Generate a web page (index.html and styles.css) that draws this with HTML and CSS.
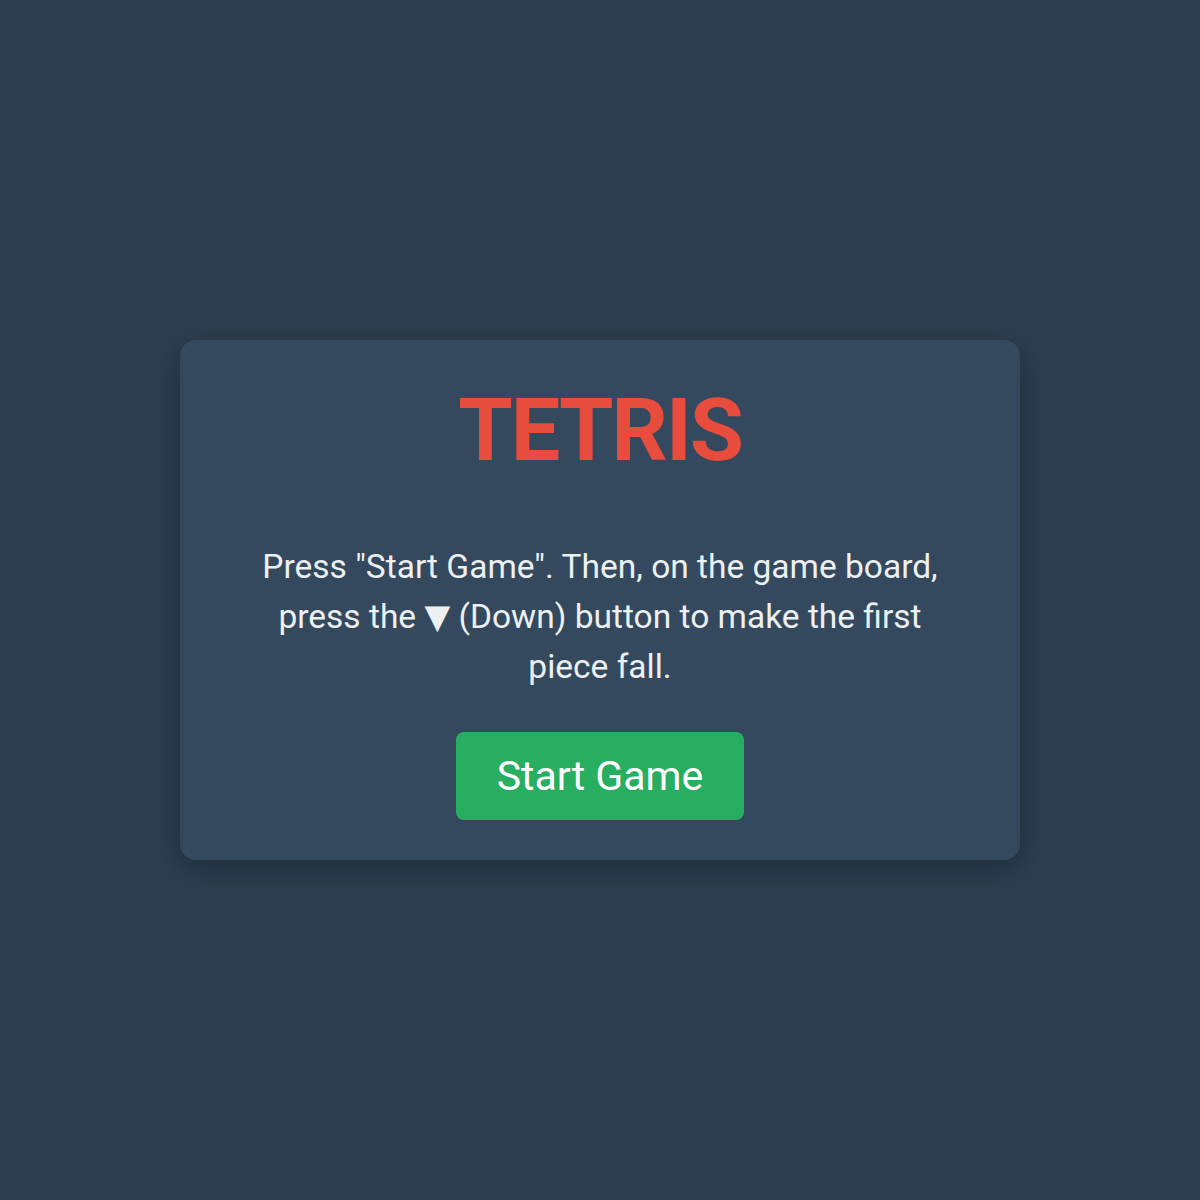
FILE: index.html
```html
<!DOCTYPE html>
<html>
<head>
<meta charset="utf-8">
<link rel="stylesheet" href="styles.css">
</head>
<body>
<div class="screen">
  <div class="card">
    <h1 class="title">TETRIS</h1>
    <p class="info">Press "Start Game". Then, on the game board, press the ▼ (Down) button to make the first piece fall.</p>
    <button class="start">Start Game</button>
  </div>
</div>
</body>
</html>
```
FILE: styles.css
```css
html, body {
  margin: 0;
  padding: 0;
  height: 100%;
}
body {
  background: #2c3e50;
  font-family: Roboto, "Liberation Sans", sans-serif;
  color: #ecf0f1;
}
.screen {
  height: 100%;
  display: flex;
  align-items: center;
  justify-content: center;
}
.card {
  width: 840px;
  box-sizing: border-box;
  background: #34495e;
  border-radius: 16px;
  box-shadow: 0 8px 30px rgba(0, 0, 0, 0.3);
  padding: 40px 80px;
  display: flex;
  flex-direction: column;
  align-items: center;
  text-align: center;
}
.title {
  margin: 0;
  font-size: 88px;
  font-weight: 700;
  line-height: 100px;
  letter-spacing: -2px;
  color: #e74c3c;
}
.info {
  margin: 62px 0 0;
  height: 150px;
  font-family: Roboto, "DejaVu Sans", sans-serif;
  font-size: 33.5px;
  line-height: 50px;
}
.start {
  flex-shrink: 0;
  margin-top: 40px;
  width: 288px;
  height: 88px;
  border: none;
  border-radius: 8px;
  background: #27ae60;
  color: #fff;
  font-family: Roboto, "Liberation Sans", sans-serif;
  font-size: 41px;
}
```
